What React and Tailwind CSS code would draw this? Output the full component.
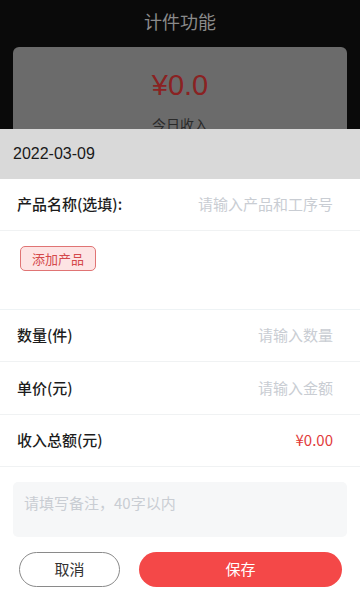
import React from "react";

const font = { fontFamily: '"Noto Sans CJK SC", "Noto Sans", sans-serif' };

function Row({ label, right, rightClass, h }) {
  return (
    <div className={(h || "h-[52px]") + " flex items-center justify-between pl-[17px] pr-[27px] border-b border-[#f0f2f3]"}>
      <span className="text-[15px] font-medium text-[#1c1c1c]">{label}</span>
      <span className={rightClass}>{right}</span>
    </div>
  );
}

export default function App() {
  return (
    <div className="w-[360px] h-[600px] bg-white overflow-hidden" style={font}>
      <div className="h-[129px] bg-[#0a0a0a] overflow-hidden flex flex-col">
        <div className="h-[46px] shrink-0 flex items-center justify-center pb-[4px]">
          <span className="text-[18px] text-[#8a8a8a] leading-none">计件功能</span>
        </div>
        <div className="mt-px mx-[13px] h-[130px] shrink-0 rounded-[6px] bg-[#6b6b6b] flex flex-col items-center">
          <span
            className="mt-[24px] text-[29px] leading-none text-[#8a2222]"
            style={{ fontFamily: '"Liberation Sans", Arial, sans-serif' }}
          >
            ¥0.0
          </span>
          <span className="mt-[17px] text-[14px] leading-none text-[#2a2a2a]">今日收入</span>
        </div>
      </div>
      <div className="h-[50px] bg-[#d9d9d9] flex items-center px-[13px]">
        <span
          className="text-[16px] text-[#1a1a1a]"
          style={{ fontFamily: '"Liberation Sans", Arial, sans-serif' }}
        >
          2022-03-09
        </span>
      </div>
      <Row
        label="产品名称(选填):"
        right="请输入产品和工序号"
        rightClass="text-[15px] text-[#c9cdd3]"
      />
      <div className="h-[79px] border-b border-[#eef3f5] pl-[20px] pt-[14px]">
        <div className="inline-flex items-center justify-center w-[76px] h-[25px] rounded-[5px] border border-[#e07474] bg-[#fde4e4] text-[13px] text-[#d4494b]">
          添加产品
        </div>
      </div>
      <Row label="数量(件)" right="请输入数量" rightClass="text-[15px] text-[#c9cdd3]" />
      <Row label="单价(元)" right="请输入金额" rightClass="text-[15px] text-[#c9cdd3]" h="h-[53px]" />
      <Row label="收入总额(元)" right="¥0.00" rightClass="text-[15px] text-[#e23b3b]" />
      <div className="mt-[15px] mx-[13px] h-[55px] rounded-[5px] bg-[#f6f7f8] px-[11px] pt-[8px]">
        <span className="text-[15px] text-[#c9cdd3]">请填写备注，40字以内</span>
      </div>
      <div className="mt-[15px] flex items-center pl-[19px] gap-[19px]">
        <div className="w-[101px] h-[35px] rounded-full border border-[#8a8a8a] flex items-center justify-center text-[15px] text-[#333]">
          取消
        </div>
        <div className="w-[203px] h-[35px] rounded-full bg-[#f44848] flex items-center justify-center text-[15px] text-white">
          保存
        </div>
      </div>
    </div>
  );
}
